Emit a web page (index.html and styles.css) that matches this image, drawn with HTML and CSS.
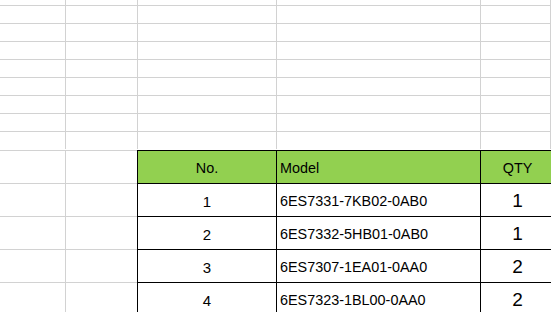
FILE: index.html
```html
<!DOCTYPE html>
<html>
<head>
<meta charset="utf-8">
<link rel="stylesheet" href="styles.css">
</head>
<body>
<div class="sheet">
  <div class="grid top">
    <div class="g first"></div><div class="g first"></div><div class="g first"></div><div class="g first"></div><div class="g first"></div>
    <div class="g"></div><div class="g"></div><div class="g"></div><div class="g"></div><div class="g"></div>
    <div class="g"></div><div class="g"></div><div class="g"></div><div class="g"></div><div class="g"></div>
    <div class="g"></div><div class="g"></div><div class="g"></div><div class="g"></div><div class="g"></div>
    <div class="g"></div><div class="g"></div><div class="g"></div><div class="g"></div><div class="g"></div>
    <div class="g"></div><div class="g"></div><div class="g"></div><div class="g"></div><div class="g"></div>
    <div class="g"></div><div class="g"></div><div class="g"></div><div class="g"></div><div class="g"></div>
    <div class="g"></div><div class="g"></div><div class="g"></div><div class="g"></div><div class="g"></div>
    <div class="g last"></div><div class="g last"></div><div class="g last"></div><div class="g last"></div><div class="g last"></div>
  </div>
  <div class="grid bottom">
    <div class="l a"></div><div class="l b"></div>
    <div class="c head no">No.</div><div class="c head model">Model</div><div class="c head qty">QTY</div>

    <div class="l a"></div><div class="l b"></div>
    <div class="c no">1</div><div class="c model">6ES7331-7KB02-0AB0</div><div class="c qty">1</div>

    <div class="l a"></div><div class="l b"></div>
    <div class="c no">2</div><div class="c model">6ES7332-5HB01-0AB0</div><div class="c qty">1</div>

    <div class="l a"></div><div class="l b"></div>
    <div class="c no">3</div><div class="c model">6ES7307-1EA01-0AA0</div><div class="c qty">2</div>

    <div class="l a"></div><div class="l b"></div>
    <div class="c no">4</div><div class="c model">6ES7323-1BL00-0AA0</div><div class="c qty">2</div>
  </div>
</div>
</body>
</html>
```
FILE: styles.css
```css
html, body {
  margin: 0;
  padding: 0;
  background: #fff;
  overflow: hidden;
}
body {
  width: 551px;
  height: 312px;
  font-family: "Liberation Sans", Arial, sans-serif;
  color: #000;
}
.sheet {
  display: flex;
  flex-direction: column;
}
.grid {
  display: grid;
  grid-template-columns: 66px 72px 139px 204px 1fr;
}
.top {
  grid-auto-rows: 18px;
  grid-template-rows: 6px;
}
.g {
  box-sizing: border-box;
  border-right: 1px solid #d2d2d2;
  border-bottom: 1px solid #d2d2d2;
}
.g.last {
  border-bottom: none;
  height: 17px;
}
.bottom {
  grid-template-columns: 66px 71px 140px 204px 1fr;
  grid-auto-rows: 33px;
}
.l {
  box-sizing: border-box;
  border-top: 1px solid #d2d2d2;
}
.l.a {
  border-right: 1px solid #d2d2d2;
}
.c {
  box-sizing: border-box;
  border-top: 1px solid #000;
  border-right: 1px solid #000;
  display: flex;
  align-items: center;
  padding-top: 2px;
  font-size: 14.4px;
  white-space: nowrap;
}
.c.no {
  border-left: 1px solid #000;
  justify-content: center;
  font-size: 15px;
}
.c.model {
  padding-left: 3px;
}
.c.qty {
  justify-content: center;
  width: 74px;
  font-size: 19px;
}
.c.head {
  background: #92d050;
  font-size: 14.4px;
}
```
